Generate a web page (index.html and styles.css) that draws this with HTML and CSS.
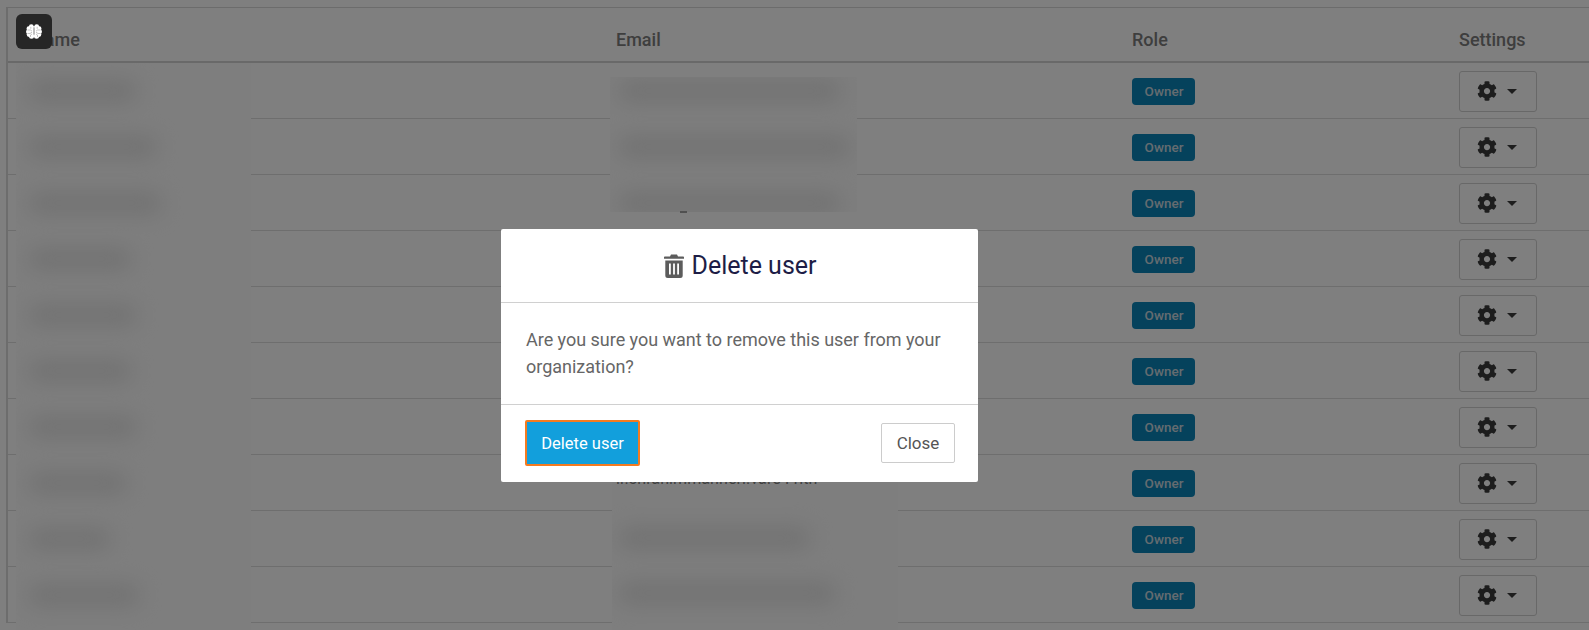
FILE: index.html
```html
<!DOCTYPE html>
<html lang="en">
<head>
<meta charset="utf-8">
<title>Delete user</title>
<link rel="stylesheet" href="styles.css">
</head>
<body>
<svg class="sprite" width="0" height="0" aria-hidden="true">
  <symbol id="gear" viewBox="0 0 512 512"><path d="M487.4 315.7l-42.6-24.6c4.3-23.2 4.3-47 0-70.2l42.6-24.6c4.9-2.8 7.1-8.6 5.5-14-11.1-35.6-30-67.8-54.7-94.6-3.8-4.1-10-5.1-14.8-2.3L380.8 110c-17.9-15.4-38.5-27.3-60.8-35.1V25.8c0-5.6-3.9-10.5-9.4-11.7-36.7-8.2-74.3-7.8-109.2 0-5.5 1.2-9.4 6.1-9.4 11.7V75c-22.2 7.9-42.8 19.8-60.8 35.1L88.7 85.5c-4.9-2.8-11-1.9-14.8 2.3-24.7 26.7-43.6 58.9-54.7 94.6-1.7 5.4.6 11.2 5.5 14L67.3 221c-4.3 23.2-4.3 47 0 70.2l-42.6 24.6c-4.9 2.8-7.1 8.6-5.5 14 11.1 35.6 30 67.8 54.7 94.6 3.8 4.1 10 5.1 14.8 2.3l42.6-24.6c17.9 15.4 38.5 27.3 60.8 35.1v49.2c0 5.6 3.9 10.5 9.4 11.7 36.7 8.2 74.3 7.8 109.2 0 5.5-1.2 9.4-6.1 9.4-11.7v-49.2c22.2-7.9 42.8-19.8 60.8-35.1l42.6 24.6c4.9 2.8 11 1.9 14.8-2.3 24.7-26.7 43.6-58.9 54.7-94.6 1.5-5.5-.7-11.3-5.6-14.1zM256 336c-44.1 0-80-35.9-80-80s35.9-80 80-80 80 35.9 80 80-35.9 80-80 80z"/></symbol>
</svg>

<main class="users">
  <div class="row head"><div class="c-name">Name</div><div class="c-email">Email</div><div class="c-role">Role</div><div class="c-set">Settings</div></div>
  <div class="row"><div class="c-name"></div><div class="c-email"></div><div class="c-role"><span class="badge">Owner</span></div><div class="c-set"><button class="gear-btn"><svg class="gear"><use href="#gear"/></svg><span class="caret"></span></button></div></div>
  <div class="row"><div class="c-name"></div><div class="c-email"></div><div class="c-role"><span class="badge">Owner</span></div><div class="c-set"><button class="gear-btn"><svg class="gear"><use href="#gear"/></svg><span class="caret"></span></button></div></div>
  <div class="row"><div class="c-name"></div><div class="c-email"></div><div class="c-role"><span class="badge">Owner</span></div><div class="c-set"><button class="gear-btn"><svg class="gear"><use href="#gear"/></svg><span class="caret"></span></button></div></div>
  <div class="row"><div class="c-name"></div><div class="c-email"></div><div class="c-role"><span class="badge">Owner</span></div><div class="c-set"><button class="gear-btn"><svg class="gear"><use href="#gear"/></svg><span class="caret"></span></button></div></div>
  <div class="row"><div class="c-name"></div><div class="c-email"></div><div class="c-role"><span class="badge">Owner</span></div><div class="c-set"><button class="gear-btn"><svg class="gear"><use href="#gear"/></svg><span class="caret"></span></button></div></div>
  <div class="row"><div class="c-name"></div><div class="c-email"></div><div class="c-role"><span class="badge">Owner</span></div><div class="c-set"><button class="gear-btn"><svg class="gear"><use href="#gear"/></svg><span class="caret"></span></button></div></div>
  <div class="row"><div class="c-name"></div><div class="c-email"></div><div class="c-role"><span class="badge">Owner</span></div><div class="c-set"><button class="gear-btn"><svg class="gear"><use href="#gear"/></svg><span class="caret"></span></button></div></div>
  <div class="row"><div class="c-name"></div><div class="c-email"></div><div class="c-role"><span class="badge">Owner</span></div><div class="c-set"><button class="gear-btn"><svg class="gear"><use href="#gear"/></svg><span class="caret"></span></button></div></div>
  <div class="row"><div class="c-name"></div><div class="c-email"></div><div class="c-role"><span class="badge">Owner</span></div><div class="c-set"><button class="gear-btn"><svg class="gear"><use href="#gear"/></svg><span class="caret"></span></button></div></div>
  <div class="row"><div class="c-name"></div><div class="c-email"></div><div class="c-role"><span class="badge">Owner</span></div><div class="c-set"><button class="gear-btn"><svg class="gear"><use href="#gear"/></svg><span class="caret"></span></button></div></div>
</main>

<div class="patch patch-names">
  <i class="blob n1"></i><i class="blob n2"></i><i class="blob n3"></i><i class="blob n4"></i><i class="blob n5"></i>
  <i class="blob n6"></i><i class="blob n7"></i><i class="blob n8"></i><i class="blob n9"></i><i class="blob n10"></i>
</div>
<div class="patch patch-mail-top">
  <i class="blob e1"></i><i class="blob e2"></i><i class="blob e3"></i>
</div>
<div class="patch patch-mail-bottom">
  <i class="blob e9"></i><i class="blob e10"></i>
</div>
<span class="stray"></span>
<span class="leak">ir.shrahimmanheri.vare Frith</span>

<div class="scrim"></div>

<button class="helper" aria-label="Assistant">
  <svg viewBox="0 0 16 15" width="16" height="15">
    <g class="brain">
      <circle cx="5.300" cy="2.600" r="2.400"/><circle cx="2.900" cy="4.700" r="2.400"/><circle cx="2.300" cy="7.800" r="2.300"/><circle cx="3" cy="10.600" r="2.300"/><circle cx="5.500" cy="12.200" r="2.500"/><rect x="4" y="2" width="3.700" height="11"/>
      <circle cx="10.700" cy="2.600" r="2.400"/><circle cx="13.100" cy="4.700" r="2.400"/><circle cx="13.700" cy="7.800" r="2.300"/><circle cx="13" cy="10.600" r="2.300"/><circle cx="10.500" cy="12.200" r="2.500"/><rect x="8.300" y="2" width="3.700" height="11"/>
    </g>
    <path class="brain-lines" d="M1.500 6h3l1.500 1.200M1.500 9.500h2.500l2-1.300M4.800 2.800v2M4.500 13v-2l1.500-1M14.500 6h-3L10 7.200M14.500 9.500H12l-2-1.300M11.200 2.800v2M11.500 13v-2L10 10"/>
  </svg>
</button>

<section class="modal" role="dialog">
  <header class="modal-head">
    <svg class="trash" viewBox="0 0 20 24" width="20" height="24">
      <path d="M7 0.500h6l1 2h5.200a.8.8 0 0 1 .8.800v1.500H0V3.300a.8.800 0 0 1 .8-.800H6Z"/>
      <path fill-rule="evenodd" d="M1.300 6.500h17.400V21.500a2.500 2.500 0 0 1-2.500 2.500H3.800a2.500 2.500 0 0 1-2.500-2.500ZM5 9.500v11h1.800v-11ZM9.100 9.500v11h1.800v-11ZM13.200 9.500v11H15v-11Z"/>
    </svg>
    <h2>Delete user</h2>
  </header>
  <div class="modal-body">Are you sure you want to remove this user from your organization?</div>
  <footer class="modal-foot">
    <button class="btn-danger">Delete user</button>
    <button class="btn-close">Close</button>
  </footer>
</section>
</body>
</html>
```

FILE: styles.css
```css
* { box-sizing: border-box; }
html, body { margin: 0; height: 630px; overflow: hidden; background: #fff; }
body { font-family: Roboto, "Liberation Sans", sans-serif; position: relative; width: 1589px; }
.sprite { position: absolute; }

.users { margin: 7px 0 0 6px; border-top: 1px solid #d8d8d8; border-left: 2px solid #dadada; }
.row { display: grid; grid-template-columns: 608px 516px 327px 130px; height: 56px; align-items: center; border-bottom: 1px solid #dcdcdc; }
.row.head { height: 55px; padding-top: 10px; border-bottom: 2px solid #d2d2d2; font-size: 18px; font-weight: 500; color: #7c7c7c; }
.c-name { padding-left: 24px; }
.c-role, .c-set { display: flex; }

.badge { width: 63px; height: 27px; margin-top: 2px; border-radius: 4px; background: #0a84b8; color: #c8d8e0; font-size: 13.500px; font-weight: 500; line-height: 27px; text-align: center; padding-left: 1px; }
.gear-btn { width: 78px; height: 41px; margin-top: 1px; padding: 0 2px 0 0; display: flex; align-items: center; justify-content: center; gap: 10px; background: #fff; border: 1px solid #d0d0d0; border-radius: 3px; }
.gear { width: 20px; height: 20px; fill: #3a3a3a; }
.caret { width: 0; height: 0; border-left: 5.500px solid transparent; border-right: 5.500px solid transparent; border-top: 5.500px solid #3a3a3a; }

.patch { position: absolute; overflow: hidden; background: #fcfcfc; }
.patch-names { left: 16px; top: 63px; width: 235px; height: 567px; }
.patch-mail-top { left: 610px; top: 77px; width: 247px; height: 135px; }
.patch-mail-bottom { left: 612px; top: 482px; width: 286px; height: 148px; }
.blob { position: absolute; display: block; height: 24px; background: #e6e6e6; border-radius: 12px; filter: blur(10px); }
.n1 { left: 12px; width: 109px; top: 16px; }
.n2 { left: 12px; width: 129px; top: 72px; }
.n3 { left: 12px; width: 134px; top: 128px; }
.n4 { left: 12px; width: 104px; top: 184px; }
.n5 { left: 12px; width: 109px; top: 240px; }
.n6 { left: 12px; width: 104px; top: 296px; }
.n7 { left: 12px; width: 109px; top: 352px; }
.n8 { left: 12px; width: 99px; top: 408px; }
.n9 { left: 12px; width: 83px; top: 464px; }
.n10 { left: 12px; width: 112px; top: 520px; }
.e1 { left: 8px; width: 223px; top: 2px; }
.e2 { left: 8px; width: 233px; top: 58px; }
.e3 { left: 8px; width: 223px; top: 114px; }
.e9 { left: 6px; width: 193px; top: 44px; }
.e10 { left: 6px; width: 218px; top: 99px; }
.stray { position: absolute; left: 680px; top: 211px; width: 7px; height: 2px; background: #a0a0a0; }
.leak { position: absolute; left: 616px; top: 469px; font-size: 16px; line-height: 20px; color: #808080; letter-spacing: .1px; }

.scrim { position: absolute; inset: 0; background: rgba(0, 0, 0, .5); }

.helper { position: absolute; left: 16px; top: 14px; width: 36px; height: 35px; padding: 0; display: flex; align-items: center; justify-content: center; background: #262626; border: 0; border-radius: 6px; }
.brain { fill: #fff; }
.brain-lines { fill: none; stroke: #8a8a8a; stroke-width: .5; }

.modal { position: absolute; left: 501px; top: 229px; width: 477px; height: 253px; display: flex; flex-direction: column; background: #fff; border-radius: 2px; }
.modal-head { height: 74px; display: flex; align-items: center; justify-content: center; gap: 7px; padding-left: 2px; border-bottom: 1px solid #d0d0d0; }
.modal-head h2 { margin: 0; font-size: 25px; font-weight: 400; color: #1d1d46; }
.trash { fill: #5c5c5c; }
.modal-body { height: 102px; padding: 24px 25px 0; font-size: 18px; line-height: 26.500px; color: #666; letter-spacing: -.02px; border-bottom: 1px solid #d0d0d0; }
.modal-foot { flex: 1; display: flex; align-items: center; justify-content: space-between; padding: 0 23px 1px 24px; }
.btn-danger { width: 115px; height: 46px; padding: 0; background: #129fdc; border: 2px solid #f47b20; border-radius: 2px; font: 400 16.500px Roboto, sans-serif; color: #fff; }
.btn-close { width: 74px; height: 40px; padding: 0; background: #fff; border: 1px solid #ccc; border-radius: 2px; font: 400 17px Roboto, sans-serif; color: #555; }
```
